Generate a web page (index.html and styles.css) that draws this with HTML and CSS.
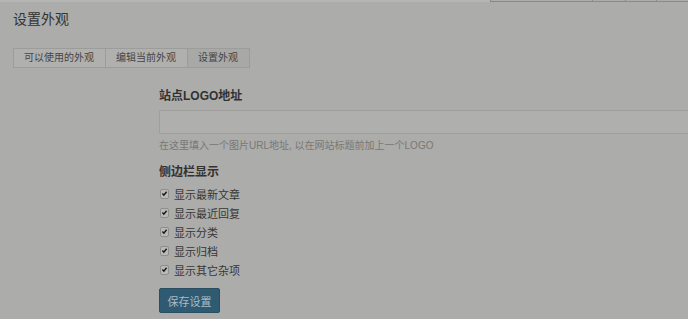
FILE: index.html
```html
<!DOCTYPE html>
<html lang="zh-CN">
<head>
<meta charset="utf-8">
<title>设置外观</title>
<link rel="stylesheet" href="styles.css">
</head>
<body>
<div class="topbar">
  <div class="topbar-left"></div>
  <div class="topbar-menu">
    <span class="menu-cell w1"></span>
    <span class="menu-cell w2"></span>
    <span class="menu-cell w3"></span>
    <span class="menu-cell w4"></span>
  </div>
</div>
<main class="page">
  <h2 class="page-title">设置外观</h2>
  <ul class="tabs">
    <li class="tab">可以使用的外观</li>
    <li class="tab">编辑当前外观</li>
    <li class="tab active">设置外观</li>
  </ul>
  <form class="form">
    <label class="field-label">站点LOGO地址</label>
    <input class="text-input" type="text">
    <p class="hint">在这里填入一个图片URL地址, 以在网站标题前加上一个LOGO</p>
    <div class="field-label group">侧边栏显示</div>
    <ul class="checks">
      <li class="check-row"><span class="box"><svg viewBox="0 0 9 9" width="9" height="9"><path d="M1.8 4.5 L3.7 6.6 L7.2 2.2" fill="none" stroke="#1a1a1a" stroke-width="1.9"/></svg></span>显示最新文章</li>
      <li class="check-row"><span class="box"><svg viewBox="0 0 9 9" width="9" height="9"><path d="M1.8 4.5 L3.7 6.6 L7.2 2.2" fill="none" stroke="#1a1a1a" stroke-width="1.9"/></svg></span>显示最近回复</li>
      <li class="check-row"><span class="box"><svg viewBox="0 0 9 9" width="9" height="9"><path d="M1.8 4.5 L3.7 6.6 L7.2 2.2" fill="none" stroke="#1a1a1a" stroke-width="1.9"/></svg></span>显示分类</li>
      <li class="check-row"><span class="box"><svg viewBox="0 0 9 9" width="9" height="9"><path d="M1.8 4.5 L3.7 6.6 L7.2 2.2" fill="none" stroke="#1a1a1a" stroke-width="1.9"/></svg></span>显示归档</li>
      <li class="check-row"><span class="box"><svg viewBox="0 0 9 9" width="9" height="9"><path d="M1.8 4.5 L3.7 6.6 L7.2 2.2" fill="none" stroke="#1a1a1a" stroke-width="1.9"/></svg></span>显示其它杂项</li>
    </ul>
    <button class="btn" type="button">保存设置</button>
  </form>
</main>
</body>
</html>
```
FILE: styles.css
```css
html, body {
  margin: 0;
  padding: 0;
  overflow: hidden;
  height: 100%;
}
body {
  background: #acacaa;
  font-family: "Liberation Sans", "Noto Sans CJK SC", sans-serif;
  color: #383837;
}
.topbar {
  display: flex;
  height: 2px;
}
.topbar-left {
  width: 490px;
  background: #b5b5b3;
}
.topbar-menu {
  flex: 1;
  display: flex;
  height: 1px;
  border-bottom: 1px solid #8a8a88;
  border-left: 1px solid #8a8a88;
}
.menu-cell {
  border-right: 1px solid #8a8a88;
}
.menu-cell.w1 { width: 101px; }
.menu-cell.w2 { width: 32px; }
.menu-cell.w3 { width: 30px; }
.menu-cell.w4 { flex: 1; border-right: 0; }

.page {
  padding-left: 13px;
}
.page-title {
  margin: 7px 0 0;
  font-size: 14px;
  line-height: 20px;
  font-weight: normal;
  color: #333332;
}
.tabs {
  list-style: none;
  margin: 19px 0 0;
  padding: 0;
  display: flex;
}
.tab {
  font-size: 10px;
  line-height: 18px;
  padding: 0 11px 0 10px;
  border: 1px solid #9c9c9a;
  border-right: 0;
  background: #b0b0ae;
  color: #454544;
}
.tab:last-child {
  border-right: 1px solid #9c9c9a;
}
.tab.active {
  background: #a8a8a6;
}
.form {
  margin: 20px 0 0 146px;
}
.field-label {
  display: block;
  font-size: 12px;
  line-height: 16px;
  font-weight: bold;
  color: #323231;
}
.text-input {
  display: block;
  box-sizing: border-box;
  margin-top: 6px;
  width: 529px;
  height: 24px;
  border: 1px solid #9e9e9c;
  border-right: 0;
  border-radius: 2px 0 0 2px;
  background: #afafad;
  padding: 0;
}
.hint {
  margin: 5px 0 0;
  font-size: 10px;
  line-height: 14px;
  color: #787877;
}
.group {
  margin-top: 11px;
}
.checks {
  list-style: none;
  margin: 4px 0 0;
  padding: 0;
}
.check-row {
  display: flex;
  align-items: center;
  height: 19px;
  font-size: 11px;
  color: #363635;
}
.box {
  display: inline-flex;
  box-sizing: border-box;
  width: 9px;
  height: 10px;
  margin: 0 5px 0 1px;
  border: 1px solid #8e8e8c;
  border-radius: 2px;
  background: #b9b9b7;
  align-items: center;
  justify-content: center;
}
.box svg {
  display: block;
}
.btn {
  display: block;
  margin-top: 9px;
  width: 61px;
  height: 25px;
  padding: 0;
  border: 1px solid #2a4d61;
  border-radius: 2px;
  background: #2e5a72;
  color: #a9bcc6;
  font-family: "Liberation Sans", "Noto Sans CJK SC", sans-serif;
  font-size: 11px;
}
```
